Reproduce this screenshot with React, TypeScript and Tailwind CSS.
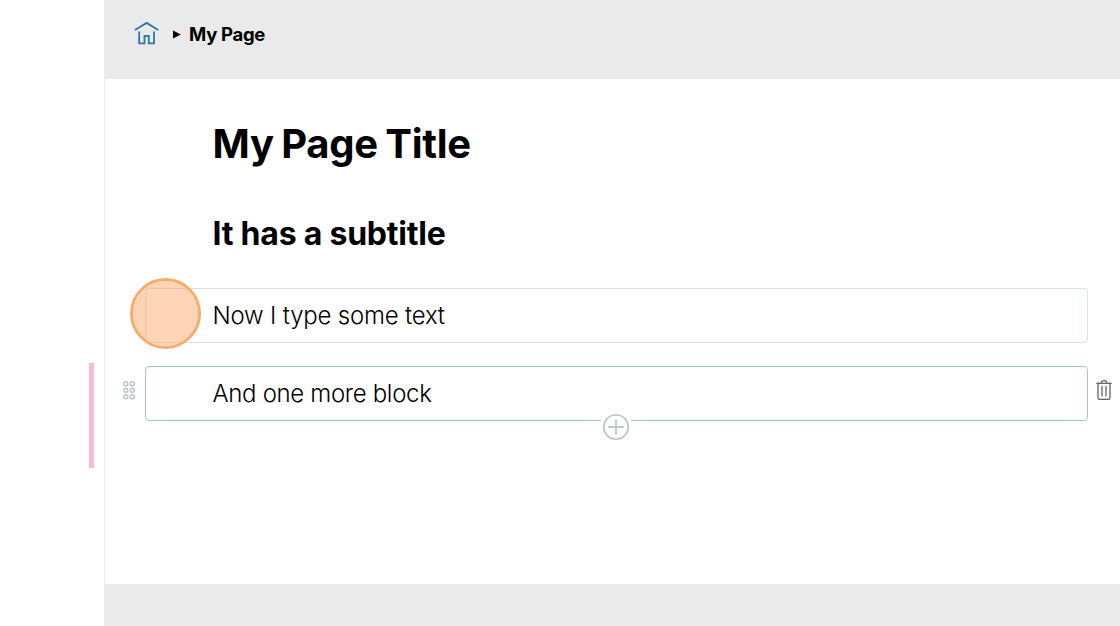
import type { ReactNode } from "react";

function HomeIcon() {
  return (
    <svg className="h-6 w-[25px] shrink-0" viewBox="0 0 25 24" fill="none" stroke="#2a78a8" strokeWidth="1.8">
      <path d="M0.9 9 L12.6 1.9 L24.3 9" />
      <path d="M5.2 10.4 V22.3 H10.5 V15 H14.8 V22.3 H20 V10.4" />
    </svg>
  );
}

function DragHandle() {
  return (
    <svg className="h-5 w-3.5 shrink-0" viewBox="0 0 14 20" fill="none" stroke="#b9c2c3" strokeWidth="1.4">
      {[3.7, 10.2, 16.7].map((y) => (
        <g key={y}>
          <circle cx="3.8" cy={y} r="2" />
          <circle cx="10.3" cy={y} r="2" />
        </g>
      ))}
    </svg>
  );
}

function TrashIcon() {
  return (
    <svg className="h-5 w-4 shrink-0" viewBox="0 0 16 20" fill="none" stroke="#646464" strokeWidth="1.3">
      <path d="M0.3 3.3 H15.7" />
      <path d="M5.5 3 V2.2 Q5.5 0.7 8 0.7 Q10.5 0.7 10.5 2.2 V3" />
      <path d="M2 3.2 V18 Q2 19.3 3.3 19.3 H12.7 Q14 19.3 14 18 V3.2" />
      <path d="M6 6 V16.3 M10 6 V16.3" />
    </svg>
  );
}

function Block({ active = false, children }: { active?: boolean; children: ReactNode }) {
  return (
    <div
      className={`relative h-[55px] w-[943px] shrink-0 rounded-[4px] border pl-[66.5px] text-[24px] leading-[53px] font-light text-black ${
        active ? "border-[#9fc7d3] tracking-[-0.33px]" : "border-[#d0e4ea] tracking-[-0.2px]"
      }`}
    >
      {children}
    </div>
  );
}

export default function App() {
  return (
    <div className="flex h-[626px] w-[1120px] overflow-hidden bg-white font-['Inter',sans-serif]">
      <aside className="flex w-[104px] shrink-0 justify-end pt-[363px] pr-[10px]">
        <div className="h-[105px] w-[5px] bg-[#f9bad4]" />
      </aside>
      <main className="flex min-w-0 flex-1 flex-col border-l border-[#e8eced]">
        <header className="flex h-[79px] shrink-0 items-start bg-[#eaeaea] pt-[21px] pl-[29px]">
          <HomeIcon />
          <svg className="mt-[9px] ml-[14px] h-[9px] w-2 shrink-0" viewBox="0 0 8 9">
            <path d="M0 0.5 L7.8 4.5 L0 8.5 Z" fill="#000" />
          </svg>
          <span className="ml-[8px] text-[18.5px] leading-[27px] font-bold tracking-[-0.3px] text-black">My Page</span>
        </header>
        <section className="flex h-[505px] shrink-0 flex-col">
          <h1 className="mt-[40px] ml-[107.5px] text-[40px] leading-[50px] font-bold tracking-[-0.3px] text-black [word-spacing:-1.6px]">
            My Page Title
          </h1>
          <h2 className="mt-[45px] ml-[107.5px] text-[32px] leading-[40px] font-bold tracking-[-0.22px] text-black">
            It has a subtitle
          </h2>
          <div className="mt-[34px] flex pl-[40px]">
            <Block>
              Now I type some text
              <div className="absolute top-[-11.5px] left-[-16.5px] h-[71px] w-[71px] rounded-full border-3 border-[#f8ac6b] bg-[#fb9f5a]/45 bg-clip-padding" />
            </Block>
          </div>
          <div className="mt-[23px] flex pl-[17px]">
            <div className="mt-[14px] mr-[9px] flex">
              <DragHandle />
            </div>
            <Block active>
              And one more block
              <div className="absolute top-[46px] left-[455px] flex h-7 w-[30px] items-center justify-center bg-white">
                <svg className="h-7 w-7" viewBox="0 0 28 28" fill="none" stroke="#bac9c9" strokeWidth="1.8">
                  <circle cx="14" cy="14" r="12.2" />
                  <path d="M6.3 14 H21.7 M14 6.3 V21.7" />
                </svg>
              </div>
            </Block>
            <div className="mt-[13.5px] ml-[8px] flex">
              <TrashIcon />
            </div>
          </div>
        </section>
        <footer className="flex-1 bg-[#eaeaea]" />
      </main>
    </div>
  );
}
